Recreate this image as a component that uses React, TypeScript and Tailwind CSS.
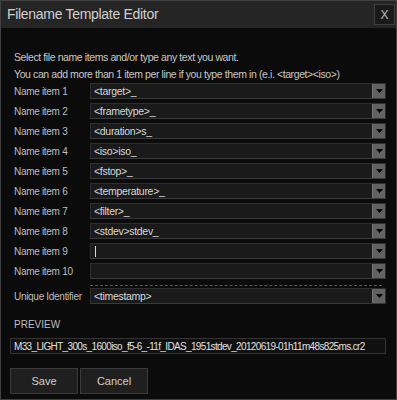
import { useState } from "react";

const items = [
  "<target>_",
  "<frametype>_",
  "<duration>s_",
  "<iso>iso_",
  "<fstop>_",
  "<temperature>_",
  "<filter>_",
  "<stdev>stdev_",
  "",
  "",
];

function Combo({ value, caret }: { value: string; caret?: boolean }) {
  return (
    <div className="flex h-[16px] flex-1 items-stretch border border-[#2e2e2e] border-b-[#3a3a3a] bg-[#1a1a1a]">
      <div className="flex flex-1 items-center pl-[3px] text-[10.5px] leading-none tracking-[-0.3px] text-[#d8d8d8]">
        {value}
        {caret && <span className="ml-[1px] h-[11px] w-px bg-[#d8d8d8]" />}
      </div>
      <div className="flex w-[13px] items-center justify-center border-l border-[#777] bg-[#626262]">
        <svg width="7" height="4" viewBox="0 0 7 4">
          <path d="M0 0h7L3.5 4z" fill="#000" />
        </svg>
      </div>
    </div>
  );
}

export default function App() {
  const [values] = useState(items);

  return (
    <div
      className="flex h-[400px] w-[397px] flex-col border border-[#414141] bg-[#0b0b0b] text-[#c8c8c8]"
      style={{ fontFamily: '"Liberation Sans", Arial, sans-serif' }}
    >
      {/* title bar */}
      <div className="flex h-[27px] shrink-0 items-center justify-between bg-[#252525] pl-[6px] pr-[1px]">
        <span className="text-[14px] tracking-[-0.3px] text-[#d0d0d0]">Filename Template Editor</span>
        <div className="flex h-[21px] w-[21px] items-center justify-center border border-[#3d3d3d] bg-[#1a1a1a] text-[12px] text-[#bbb]">
          X
        </div>
      </div>

      <div className="flex flex-1 flex-col px-[9px] pt-[21px]">
        <p className="whitespace-nowrap pl-[4px] text-[10.5px] leading-[17px] tracking-[-0.4px]">
          Select file name items and/or type any text you want.
        </p>
        <p className="whitespace-nowrap pl-[4px] text-[10.5px] leading-[17px] tracking-[-0.4px]">
          You can add more than 1 item per line if you type them in (e.i. &lt;target&gt;&lt;iso&gt;)
        </p>

        <div className="flex flex-col gap-[4px] pr-[1px]">
          {values.map((v, i) => (
            <div key={i} className="flex items-center">
              <span className="w-[80px] whitespace-nowrap pl-[4px] text-[10px] tracking-[-0.3px] text-[#bdbdbd]">
                Name item {i + 1}
              </span>
              <Combo value={v} caret={i === 8} />
            </div>
          ))}
        </div>

        <div className="ml-[80px] mr-[5px] mt-[6px] border-t border-dashed border-[#5a5a5a]" />

        <div className="mt-[2px] flex items-center pr-[1px]">
          <span className="w-[80px] whitespace-nowrap pl-[4px] text-[10px] tracking-[-0.3px] text-[#bdbdbd]">
            Unique Identifier
          </span>
          <Combo value="<timestamp>" />
        </div>

        <span className="mt-[13px] pl-[4px] text-[10px] text-[#bdbdbd]">PREVIEW</span>

        <div className="mr-[1px] mt-[6px] flex h-[16px] items-center whitespace-nowrap border border-[#333] bg-[#101010] pl-[3px] text-[10px] tracking-[-0.65px] text-[#e0e0e0]">
          M33_LIGHT_300s_1600iso_f5-6_-11f_IDAS_1951stdev_20120619-01h11m48s825ms.cr2
        </div>

        <div className="mt-[14px] flex gap-[2px]">
          <button className="h-[26px] w-[68px] border border-[#3a3a3a] bg-[#1f1f1f] text-[11px] text-[#d0d0d0]">
            Save
          </button>
          <button className="h-[26px] w-[68px] border border-[#3a3a3a] bg-[#1f1f1f] text-[11px] text-[#d0d0d0]">
            Cancel
          </button>
        </div>
      </div>
    </div>
  );
}
